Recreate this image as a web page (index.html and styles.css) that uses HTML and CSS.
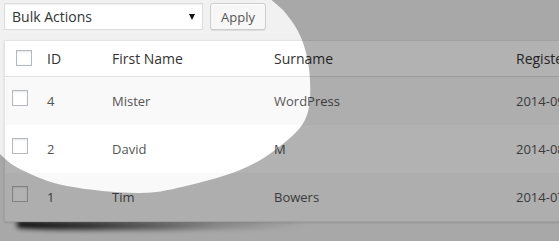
FILE: index.html
```html
<!DOCTYPE html>
<html lang="en">
<head>
<meta charset="utf-8">
<title>Users list</title>
<link rel="stylesheet" href="styles.css">
</head>
<body>
<div class="page">
  <div class="tablenav">
    <div class="select"><span class="select-label">Bulk Actions</span><span class="arrow"></span></div>
    <button class="btn">Apply</button>
  </div>
  <div class="table-wrap">
    <div class="list">
      <div class="row head">
        <div class="cell check"><span class="cb"></span></div>
        <div class="cell">ID</div>
        <div class="cell">First Name</div>
        <div class="cell">Surname</div>
        <div class="cell">Registered</div>
      </div>
      <div class="row alt">
        <div class="cell check"><span class="cb"></span></div>
        <div class="cell">4</div>
        <div class="cell">Mister</div>
        <div class="cell">WordPress</div>
        <div class="cell">2014-09-12</div>
      </div>
      <div class="row">
        <div class="cell check"><span class="cb"></span></div>
        <div class="cell">2</div>
        <div class="cell">David</div>
        <div class="cell">M</div>
        <div class="cell">2014-08-21</div>
      </div>
      <div class="row alt">
        <div class="cell check"><span class="cb"></span></div>
        <div class="cell">1</div>
        <div class="cell">Tim</div>
        <div class="cell">Bowers</div>
        <div class="cell">2014-07-30</div>
      </div>
    </div>
  </div>
</div>
<svg class="spot" width="559" height="241" viewBox="0 0 559 241" aria-hidden="true">
  <path fill="rgba(0,0,0,0.3)" fill-rule="evenodd" d="M0 0H559V241H0Z M237 -30 L283 10 C290.8 19.2 297.5 28.3 302 40 C306.5 51.7 309.5 66.7 310 80 C310.5 93.3 310.8 108.3 305 120 C299.2 131.7 285.8 141.7 275 150 C264.2 158.3 254.2 164.2 240 170 C225.8 175.8 206.7 181.2 190 185 C173.3 188.8 160.5 192.8 140 193 C119.5 193.2 86.7 189.8 67 186 C47.3 182.2 33.2 175.3 22 170 C10.8 164.7 6.2 159.8 0 154 C-6.2 148.2 -10.8 142.3 -15 135 L-30 100 L-30 -30 Z"/>
</svg>
</body>
</html>
```
FILE: styles.css
```css
html, body {
  margin: 0;
  padding: 0;
  background: #f1f1f1;
  overflow: hidden;
  width: 559px;
  height: 241px;
}

body {
  font-family: "Open Sans", "Noto Sans", sans-serif;
  color: #333;
}

.page {
  padding: 3px 0 0 4px;
}

.tablenav {
  display: flex;
  align-items: center;
  gap: 7px;
  height: 27px;
}

.select {
  box-sizing: border-box;
  width: 199px;
  height: 27px;
  display: flex;
  align-items: center;
  justify-content: space-between;
  padding: 0 7px 0 7px;
  background: #fff;
  border: 1px solid #ddd;
  box-shadow: inset 0 1px 2px rgba(0, 0, 0, 0.07);
  font-size: 14px;
  color: #333;
}

.select-label {
  line-height: 1;
}

.arrow {
  width: 0;
  height: 0;
  border-left: 3px solid transparent;
  border-right: 3px solid transparent;
  border-top: 6px solid #111;
  margin-top: 1px;
}

.btn {
  box-sizing: border-box;
  height: 27px;
  width: 56px;
  padding: 0;
  background: #f7f7f7;
  border: 1px solid #ccc;
  border-radius: 3px;
  box-shadow: inset 0 1px 0 #fff, 0 1px 0 rgba(0, 0, 0, 0.08);
  font-family: "Open Sans", "Noto Sans", sans-serif;
  font-size: 13px;
  color: #555;
}

.table-wrap {
  position: relative;
  z-index: 0;
  margin-top: 10px;
  width: 700px;
}

.table-wrap::after {
  content: "";
  position: absolute;
  z-index: -1;
  left: 13px;
  top: 100%;
  width: 290px;
  height: 9px;
  margin-top: -1px;
  background: linear-gradient(to right, rgba(0, 0, 0, 0.95) 0%, rgba(0, 0, 0, 0.7) 25%, rgba(0, 0, 0, 0.2) 70%, rgba(0, 0, 0, 0) 100%);
  filter: blur(2.5px);
  border-radius: 0 0 60% 30%;
}

.list {
  position: relative;
  background: #fff;
  border: 1px solid #e5e5e5;
  box-shadow: 0 1px 2px rgba(0, 0, 0, 0.12);
}

.row {
  display: grid;
  grid-template-columns: 30px 65px 162px 242px 196px;
  height: 48px;
  font-size: 13px;
  color: #555;
}

.row.alt {
  background: #f9f9f9;
}

.row.head {
  height: 35px;
  border-bottom: 1px solid #e1e1e1;
  font-size: 14px;
  color: #333;
}

.cell {
  display: flex;
  align-items: center;
  padding-left: 12px;
  white-space: nowrap;
}

.cell.check {
  padding-left: 7px;
  align-items: flex-start;
  padding-top: 13px;
}

.head .cell.check {
  padding-left: 11px;
  padding-top: 9px;
}

.cb {
  box-sizing: border-box;
  display: block;
  width: 16px;
  height: 16px;
  background: #fff;
  border: 1px solid #b4b9be;
  box-shadow: inset 0 1px 2px rgba(0, 0, 0, 0.1);
}

.spot {
  position: fixed;
  top: 0;
  left: 0;
  pointer-events: none;
}
```
